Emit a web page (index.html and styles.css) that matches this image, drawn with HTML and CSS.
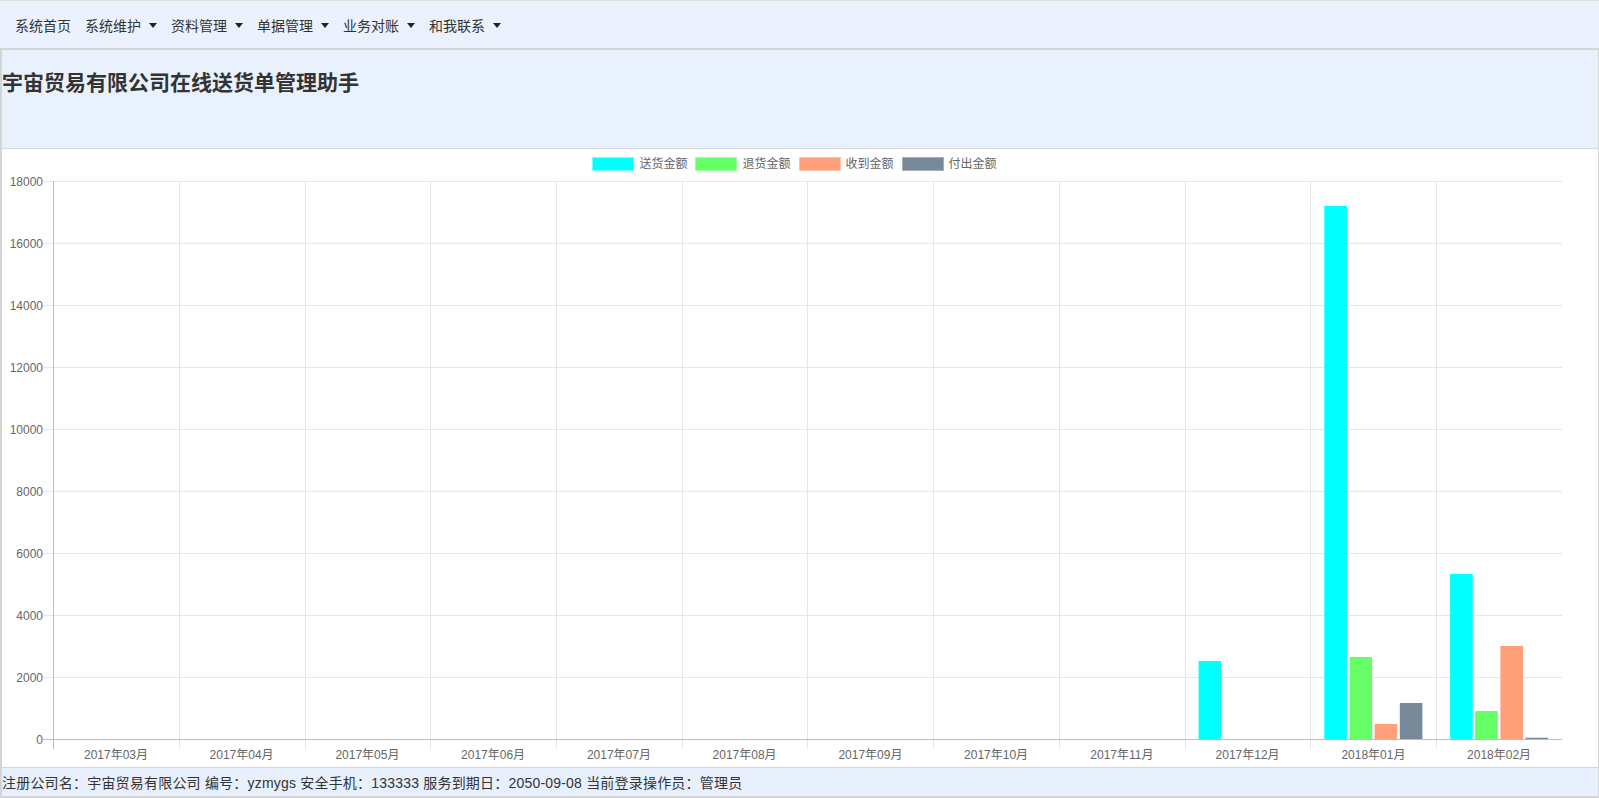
FILE: index.html
```html
<!DOCTYPE html>
<html lang="zh-CN">
<head>
<meta charset="utf-8">
<title>宇宙贸易有限公司在线送货单管理助手</title>
<link rel="stylesheet" href="styles.css">
</head>
<body>
<nav class="topnav">
  <a class="nav-link">系统首页</a>
  <a class="nav-link">系统维护<span class="caret"></span></a>
  <a class="nav-link">资料管理<span class="caret"></span></a>
  <a class="nav-link">单据管理<span class="caret"></span></a>
  <a class="nav-link">业务对账<span class="caret"></span></a>
  <a class="nav-link">和我联系<span class="caret"></span></a>
</nav>
<main class="frame">
  <header class="banner">
    <h1 class="title">宇宙贸易有限公司在线送货单管理助手</h1>
  </header>
  <section class="chart">
    <div class="legend">
      <div class="legend-item"><span class="swatch sw-send"></span>送货金额</div>
      <div class="legend-item"><span class="swatch sw-return"></span>退货金额</div>
      <div class="legend-item"><span class="swatch sw-recv"></span>收到金额</div>
      <div class="legend-item"><span class="swatch sw-pay"></span>付出金额</div>
    </div>
    <svg class="plot" width="1596" height="596" viewBox="2 171 1596 596" xmlns="http://www.w3.org/2000/svg">
      <g class="hgrid" stroke="#e6e6e6" stroke-width="1">
        <line x1="43" y1="181.5" x2="1562" y2="181.5"/>
        <line x1="43" y1="243.5" x2="1562" y2="243.5"/>
        <line x1="43" y1="305.5" x2="1562" y2="305.5"/>
        <line x1="43" y1="367.5" x2="1562" y2="367.5"/>
        <line x1="43" y1="429.5" x2="1562" y2="429.5"/>
        <line x1="43" y1="491.5" x2="1562" y2="491.5"/>
        <line x1="43" y1="553.5" x2="1562" y2="553.5"/>
        <line x1="43" y1="615.5" x2="1562" y2="615.5"/>
        <line x1="43" y1="677.5" x2="1562" y2="677.5"/>
      </g>
      <g class="vgrid" stroke="#e6e6e6" stroke-width="1">
        <line x1="179.5" y1="181" x2="179.5" y2="749"/>
        <line x1="305.5" y1="181" x2="305.5" y2="749"/>
        <line x1="430.5" y1="181" x2="430.5" y2="749"/>
        <line x1="556.5" y1="181" x2="556.5" y2="749"/>
        <line x1="682.5" y1="181" x2="682.5" y2="749"/>
        <line x1="807.5" y1="181" x2="807.5" y2="749"/>
        <line x1="933.5" y1="181" x2="933.5" y2="749"/>
        <line x1="1059.5" y1="181" x2="1059.5" y2="749"/>
        <line x1="1185.5" y1="181" x2="1185.5" y2="749"/>
        <line x1="1310.5" y1="181" x2="1310.5" y2="749"/>
        <line x1="1436.5" y1="181" x2="1436.5" y2="749"/>
      </g>
      <g stroke="#bdbdbd" stroke-width="1">
        <line x1="53.5" y1="181" x2="53.5" y2="749"/>
        <line x1="43" y1="739.5" x2="1562" y2="739.5"/>
      </g>
      <g class="ylabels" font-size="12" fill="#666" text-anchor="end">
        <text x="43" y="185.5">18000</text>
        <text x="43" y="247.5">16000</text>
        <text x="43" y="309.5">14000</text>
        <text x="43" y="371.5">12000</text>
        <text x="43" y="433.5">10000</text>
        <text x="43" y="495.5">8000</text>
        <text x="43" y="557.5">6000</text>
        <text x="43" y="619.5">4000</text>
        <text x="43" y="681.5">2000</text>
        <text x="43" y="743.5">0</text>
      </g>
      <g class="xlabels" font-size="12" fill="#666" text-anchor="middle">
        <text x="116" y="758.5">2017年03月</text>
        <text x="241.6" y="758.5">2017年04月</text>
        <text x="367.4" y="758.5">2017年05月</text>
        <text x="493.1" y="758.5">2017年06月</text>
        <text x="618.9" y="758.5">2017年07月</text>
        <text x="744.6" y="758.5">2017年08月</text>
        <text x="870.4" y="758.5">2017年09月</text>
        <text x="996.1" y="758.5">2017年10月</text>
        <text x="1121.9" y="758.5">2017年11月</text>
        <text x="1247.6" y="758.5">2017年12月</text>
        <text x="1373.4" y="758.5">2018年01月</text>
        <text x="1499.1" y="758.5">2018年02月</text>
      </g>
      <g class="bars">
        <rect x="1198.6" y="661" width="22.6" height="78" fill="#00ffff"/>
        <rect x="1324.3" y="206" width="22.6" height="533" fill="#00ffff"/>
        <rect x="1349.5" y="657" width="22.6" height="82" fill="#66ff66"/>
        <rect x="1374.6" y="724" width="22.6" height="15" fill="#ffa07a"/>
        <rect x="1399.8" y="703" width="22.6" height="36" fill="#778899"/>
        <rect x="1450.1" y="574" width="22.6" height="165" fill="#00ffff"/>
        <rect x="1475.2" y="711" width="22.6" height="28" fill="#66ff66"/>
        <rect x="1500.4" y="646" width="22.6" height="93" fill="#ffa07a"/>
        <rect x="1525.5" y="737.7" width="22.6" height="1.3" fill="#778899"/>
      </g>
    </svg>
  </section>
  <footer class="status">注册公司名：宇宙贸易有限公司 编号：yzmygs 安全手机：133333 服务到期日：2050-09-08 当前登录操作员：管理员</footer>
</main>
</body>
</html>
```
FILE: styles.css
```css
html, body {
  margin: 0;
  padding: 0;
}
body {
  font-family: "Liberation Sans", "Noto Sans CJK SC", sans-serif;
  color: #333;
  background: #fff;
  overflow: hidden;
}
.topnav {
  display: flex;
  align-items: center;
  height: 44px;
  padding: 3px 0 0 8px;
  border-top: 1px solid #e2e2e2;
  background: #ebf2fd;
}
.nav-link {
  display: flex;
  align-items: center;
  padding: 0 7px;
  font-size: 14px;
  line-height: 20px;
  color: #333;
  cursor: pointer;
}
.caret {
  display: inline-block;
  width: 0;
  height: 0;
  margin-left: 8px;
  margin-top: -2px;
  border-top: 5px solid #222;
  border-left: 4px solid transparent;
  border-right: 4px solid transparent;
}
.frame {
  display: flex;
  flex-direction: column;
  border-top: 2px solid #d5d5d5;
  border-left: 2px solid #d5d5d5;
  border-right: 1px solid #d5d5d5;
  border-bottom: 2px solid #d5d5d5;
}
.banner {
  box-sizing: border-box;
  height: 99px;
  border-bottom: 1px solid #d6d6d6;
  background: #e9f1fd;
}
.title {
  margin: 0;
  padding: 21px 0 0 0;
  font-size: 21px;
  line-height: 24px;
  font-weight: bold;
  color: #333;
}
.chart {
  display: flex;
  flex-direction: column;
  height: 618px;
  background: #fff;
}
.legend {
  display: flex;
  justify-content: center;
  gap: 8px;
  height: 22px;
  padding: 8px 11px 0 0;
  box-sizing: border-box;
}
.legend-item {
  display: flex;
  align-items: flex-start;
  gap: 5px;
  font-size: 12px;
  line-height: 14px;
  color: #666;
}
.swatch {
  display: block;
  width: 40px;
  height: 12px;
  border: 1px solid;
}
.sw-send { background: #00ffff; border-color: #7ff; }
.sw-return { background: #66ff66; border-color: #9f9; }
.sw-recv { background: #ffa07a; border-color: #ffc1a6; }
.sw-pay { background: #778899; border-color: #a3b0bc; }
.plot {
  display: block;
  font-family: "Liberation Sans", "Noto Sans CJK SC", sans-serif;
}
.status {
  height: 28px;
  border-top: 1px solid #d6d6d6;
  background: #e8f0fd;
  font-size: 14px;
  line-height: 30px;
  letter-spacing: 0.2px;
  color: #333;
  white-space: nowrap;
}
```
